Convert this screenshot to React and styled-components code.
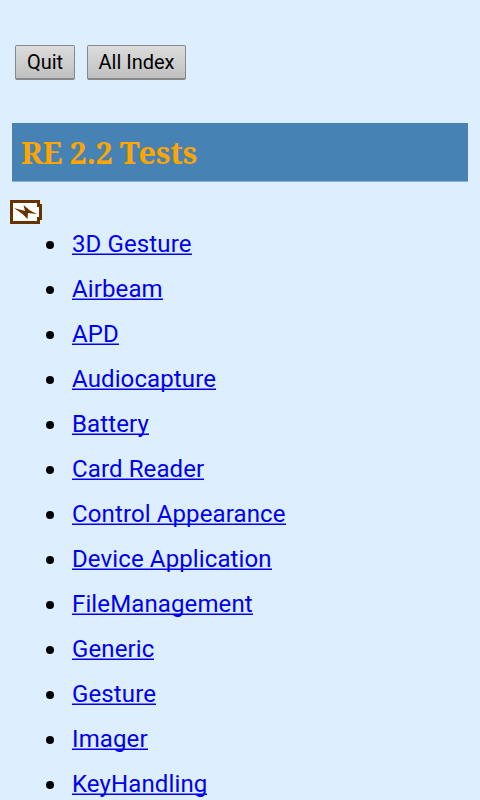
import React from "react";
import styled, { createGlobalStyle } from "styled-components";

const Global = createGlobalStyle`
  html, body { margin: 0; background: #ddeeff; }
`;
const Page = styled.main`
  box-sizing: border-box;
  height: 800px;
  overflow: hidden;
  padding: 45px 12px 0;
  background: #ddeeff;
  font-family: Roboto, sans-serif;
  color: #000;
`;
const Toolbar = styled.div`
  display: flex;
  gap: 12px;
  padding-left: 3px;
`;
const Button = styled.button`
  box-sizing: border-box;
  width: ${(p) => p.$width}px;
  height: 35px;
  padding: 0;
  border: 1.5px solid #888;
  border-bottom-width: 2px;
  border-radius: 2px;
  background: linear-gradient(#dcdcdc, #c0c0c0);
  font: 400 20px/32px Roboto, sans-serif;
  color: #000;
`;
const Title = styled.h1`
  box-sizing: border-box;
  height: 59px;
  margin: 43px 0 0;
  padding-left: 9px;
  border-bottom: 1px solid #8bb3d9;
  background: #4682b4;
  color: #ffa500;
  font: bold 30.5px/58px "Noto Serif", "Droid Serif", "Liberation Serif", serif;
  letter-spacing: -0.15px;
  word-spacing: -0.5px;
`;
const Battery = styled.svg`
  display: block;
  margin: 18px 0 0 -2px;
`;
const List = styled.ul`
  margin: -2px 0 0;
  padding: 0 0 0 34px;
  list-style: none;
  font-size: 24px;
  font-weight: 400;
  letter-spacing: 0.12px;
`;
const Item = styled.li`
  display: flex;
  align-items: center;
  gap: 18px;
  height: 45px;
  line-height: 45px;
`;
const Bullet = styled.span`
  width: 8px;
  height: 8px;
  margin-top: 1px;
  border-radius: 50%;
  background: #000;
`;
const Link = styled.a`
  color: #0000ee;
  text-decoration: none;
  background: linear-gradient(#7474f6 50%, #0000ee 50%) 0 31px / 100% 2px no-repeat;
`;

const tests = ["3D Gesture", "Airbeam", "APD", "Audiocapture", "Battery", "Card Reader", "Control Appearance", "Device Application", "FileManagement", "Generic", "Gesture", "Imager", "KeyHandling"];

export default function App() {
  return (
    <Page>
      <Global />
      <Toolbar>
        <Button $width={60}>Quit</Button>
        <Button $width={99}>All Index</Button>
      </Toolbar>
      <Title>RE 2.2 Tests</Title>
      <Battery width="32" height="24" viewBox="0 0 32 24">
        <path d="M1.5 1.5H28.5V5.5H30.5V18.5H28.5V22.5H1.5Z" fill="#fff" stroke="#630" strokeWidth="3" />
        <path d="M4 8L15 11L13.5 5L20 10.5L27 14L18 13L17.5 19L12.5 14Z" fill="#630" />
      </Battery>
      <List>
        {tests.map((t) => (
          <Item key={t}><Bullet /><Link href="#">{t}</Link></Item>
        ))}
      </List>
    </Page>
  );
}
